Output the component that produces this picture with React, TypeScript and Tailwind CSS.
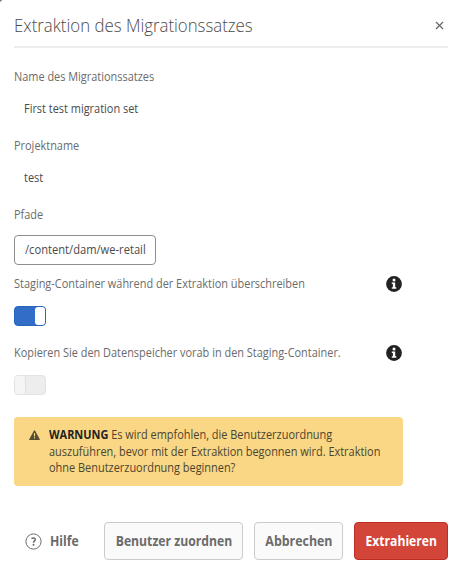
import React from "react";

function InfoIcon() {
  return (
    <svg width="16" height="16" viewBox="0 0 16 16" className="block shrink-0">
      <circle cx="8" cy="8" r="7.9" fill="#222" />
      <circle cx="8" cy="4.1" r="1.5" fill="#fff" />
      <path d="M5.8 6.6H9.2V11.3H10.3V12.7H5.8V11.3H6.9V8H5.8Z" fill="#fff" />
    </svg>
  );
}

function Text({ children }: { children: React.ReactNode }) {
  return <span className="inline-block origin-left scale-x-[0.911]">{children}</span>;
}

function OptionLabel({ children }: { children: React.ReactNode }) {
  return (
    <div className="flex h-4 w-[388px] items-center justify-between text-[#6b6b6b]">
      <Text>{children}</Text>
      <InfoIcon />
    </div>
  );
}

export default function App() {
  return (
    <div className="relative h-[568px] w-[454px] overflow-hidden bg-white pl-[14px] font-['Open_Sans','Noto_Sans',sans-serif] text-[12px] leading-4 whitespace-nowrap text-[#4b4b4b]">
      <svg className="absolute top-0 left-0" width="4" height="4" viewBox="0 0 4 4">
        <path d="M0 0H2.6Q.5 .5 0 2.6Z" fill="#777" />
      </svg>
      <header className="flex h-12 w-[434px] items-center justify-between border-b-2 border-[#ededed] pt-1">
        <h1 className="origin-left scale-x-[0.885] text-[19px] leading-6 font-light">Extraktion des Migrationssatzes</h1>
        <svg width="9" height="9" viewBox="0 0 9 9" className="mr-1 block">
          <path d="M1 1L8 8M8 1L1 8" stroke="#666" strokeWidth="1.2" />
        </svg>
      </header>

      <div className="mt-[21px] h-4 text-[#6b6b6b]"><Text>Name des Migrationssatzes</Text></div>
      <div className="mt-4 h-4 pl-[10px]"><Text>First test migration set</Text></div>
      <div className="mt-[21px] h-4 text-[#6b6b6b]"><Text>Projektname</Text></div>
      <div className="mt-4 h-4 pl-[10px]"><Text>test</Text></div>
      <div className="mt-[21px] h-4 text-[#6b6b6b]"><Text>Pfade</Text></div>
      <div className="mt-3 flex h-[30px] w-[142px] items-center rounded-[4px] border border-[#8e8e8e] pl-[10px]">
        <span className="inline-block origin-left scale-x-[0.93]">/content/dam/we-retail</span>
      </div>

      <div className="mt-[11px]">
        <OptionLabel>Staging-Container während der Extraktion überschreiben</OptionLabel>
      </div>
      <div className="mt-[14px] flex h-5 w-8 justify-end rounded-[4px] border border-[#2465c0] bg-[#326ec8]">
        <div className="h-full w-[10px] rounded-[3px] bg-white" />
      </div>
      <div className="mt-[19px]">
        <OptionLabel>Kopieren Sie den Datenspeicher vorab in den Staging-Container.</OptionLabel>
      </div>
      <div className="mt-[14px] flex h-5 w-8 rounded-[4px] border border-[#e3e3e3] bg-[#ededed]">
        <div className="h-full w-[11px] rounded-[3px] border-r border-[#e1e1e1] bg-[#f5f5f5]" />
      </div>

      <section className="mt-[22px] flex h-[69px] w-[389px] rounded-[4px] bg-[#fad785] pt-[10px] pl-[15px] text-[#4b4530]">
        <svg width="11" height="10" viewBox="0 0 11 10" className="mt-[3px] mr-[9px] block shrink-0">
          <path d="M5.5 .6L10.4 9.5H.6Z" fill="#554b32" stroke="#554b32" strokeLinejoin="round" />
          <path d="M5.5 3V6.4M5.5 7.3V8.6" stroke="#fad785" strokeWidth="1.2" />
        </svg>
        <div className="origin-left scale-x-[0.912] leading-[16.5px]">
          <p><strong className="text-[#222]">WARNUNG</strong> Es wird empfohlen, die Benutzerzuordnung</p>
          <p>auszuführen, bevor mit der Extraktion begonnen wird. Extraktion</p>
          <p>ohne Benutzerzuordnung beginnen?</p>
        </div>
      </section>

      <footer className="mt-9 flex h-[38px] items-center text-[14px] leading-5 font-bold text-[#6b6b6b]">
        <div className="flex w-[90px] items-center pl-[11px]">
          <svg width="17" height="17" viewBox="0 0 17 17" className="mr-2 block shrink-0">
            <circle cx="8.5" cy="8.5" r="7.6" fill="none" stroke="#6b6b6b" />
            <path d="M6.5 5.6C7.6 4.7 10.3 4.7 10.3 6.5C10.3 7.9 8.5 8 8.5 9.8" fill="none" stroke="#6b6b6b" strokeWidth="1.5" />
            <circle cx="8.5" cy="11.8" r="1" fill="#6b6b6b" />
          </svg>
          <span className="inline-block origin-left scale-x-[0.87]">Hilfe</span>
        </div>
        <button className="mr-[11px] flex h-[38px] w-[139px] items-center justify-center rounded-[4px] border border-[#cbcbcb] bg-[#fafafa]"><span className="inline-block scale-x-[0.87]">Benutzer zuordnen</span></button>
        <button className="mr-[11px] flex h-[38px] w-[89px] items-center justify-center rounded-[4px] border border-[#cbcbcb] bg-[#fafafa]"><span className="inline-block scale-x-[0.885]">Abbrechen</span></button>
        <button className="flex h-[38px] w-[94px] items-center justify-center rounded-[4px] border border-[#bd2d21] bg-[#d34538] text-white"><span className="inline-block scale-x-[0.865]">Extrahieren</span></button>
      </footer>
    </div>
  );
}
